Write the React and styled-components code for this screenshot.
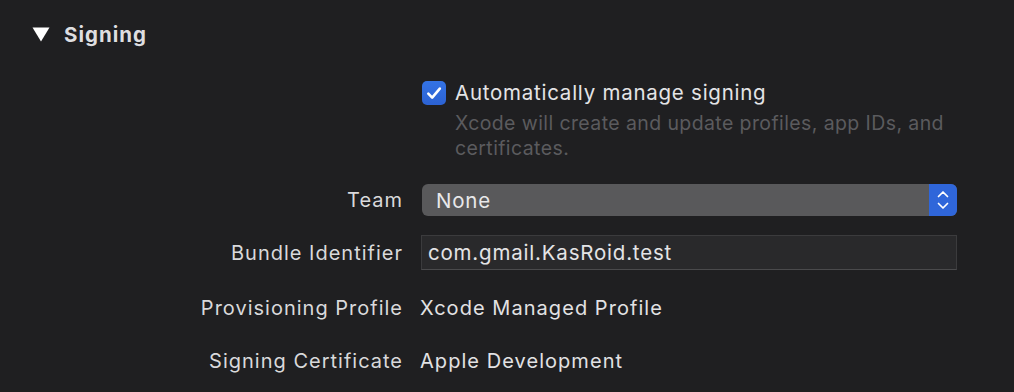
import React from "react";
import styled, { createGlobalStyle } from "styled-components";

const Global = createGlobalStyle`
  html, body { margin: 0; padding: 0; background: #1f1f21; }
  body { font-family: Inter, "Noto Sans", "Liberation Sans", sans-serif; -webkit-font-smoothing: antialiased; }
`;

const Page = styled.div`
  width: 1014px;
  height: 392px;
  background: #1f1f21;
  box-sizing: border-box;
  padding-top: 23px;
  overflow: hidden;
`;

const Header = styled.div`
  display: flex;
  align-items: center;
  gap: 14px;
  height: 24px;
  padding-left: 32px;
`;

const Disclosure = styled.svg`
  width: 18px;
  height: 15px;
  display: block;
  margin-top: -2px;
`;

const SectionTitle = styled.span`
  font-size: 20.5px;
  font-weight: 700;
  letter-spacing: 1px;
  color: #dedee0;
  line-height: 24px;
`;

const Row = styled.div`
  display: grid;
  grid-template-columns: 402px 537px;
  column-gap: 18px;
  align-items: center;
  height: ${(p) => p.$h}px;
  margin-top: ${(p) => p.$mt}px;
`;

const Label = styled.div`
  text-align: right;
  font-size: 20px;
  letter-spacing: 1px;
  margin-right: -1px;
  color: #d9d9db;
  white-space: nowrap;
`;

const Value = styled.div`
  font-size: 20px;
  letter-spacing: 1.05px;
  color: #e2e2e4;
  white-space: nowrap;
`;

const CheckLine = styled.div`
  display: flex;
  align-items: center;
  gap: 9px;
  padding-left: 2px;
`;

const CheckBox = styled.div`
  width: 24px;
  height: 24px;
  border-radius: 5px;
  background: linear-gradient(#3473e4, #2c62d3);
  display: flex;
  align-items: center;
  justify-content: center;
`;

const CheckText = styled.span`
  font-size: 20.5px;
  letter-spacing: 0.75px;
  color: #e4e4e6;
`;

const Desc = styled.div`
  grid-column: 2;
  padding-left: 35px;
  font-size: 19.5px;
  letter-spacing: 0.4px;
  line-height: 25px;
  color: #5b5b5e;
  width: 500px;
`;

const DescRow = styled.div`
  display: grid;
  grid-template-columns: 402px 537px;
  column-gap: 18px;
  margin-top: ${(p) => p.$mt}px;
`;

const Popup = styled.div`
  margin-left: 2px;
  height: 32px;
  border-radius: 6px;
  background: #59595b;
  display: flex;
  align-items: stretch;
  overflow: hidden;
`;

const PopupText = styled.div`
  flex: 1;
  display: flex;
  align-items: center;
  padding-left: 14px;
  font-size: 20.5px;
  letter-spacing: 0.8px;
  color: #e8e8ea;
`;

const Stepper = styled.div`
  width: 28px;
  background: #2f66da;
  display: flex;
  align-items: center;
  justify-content: center;
`;

const Field = styled.div`
  margin-left: 1px;
  height: 35px;
  box-sizing: border-box;
  background: #29292b;
  border: 1px solid #3b3b3d;
  border-bottom-color: #4a4a4c;
  display: flex;
  align-items: center;
  padding-left: 6px;
  font-size: 20.5px;
  letter-spacing: 0.8px;
  color: #e4e4e6;
`;

export default function App() {
  return (
    <Page>
      <Global />
      <Header>
        <Disclosure viewBox="0 0 18 15">
          <polygon points="0.5,0.5 17.5,0.5 9,14.5" fill="#ffffff" />
        </Disclosure>
        <SectionTitle>Signing</SectionTitle>
      </Header>

      <Row $h={24} $mt={33}>
        <Label />
        <CheckLine>
          <CheckBox>
            <svg width="24" height="24" viewBox="0 0 24 24">
              <path d="M6.3 12.6 L10.2 16.6 L17.8 7.6" fill="none" stroke="#fff" strokeWidth="2.6" strokeLinecap="round" strokeLinejoin="round" />
            </svg>
          </CheckBox>
          <CheckText>Automatically manage signing</CheckText>
        </CheckLine>
      </Row>

      <DescRow $mt={7}>
        <Desc>Xcode will create and update profiles, app IDs, and certificates.</Desc>
      </DescRow>

      <Row $h={32} $mt={23}>
        <Label>Team</Label>
        <Popup>
          <PopupText>None</PopupText>
          <Stepper>
            <svg width="14" height="20" viewBox="0 0 14 20">
              <path d="M2.5 6.5 L7 2 L11.5 6.5" fill="none" stroke="#fff" strokeWidth="1.7" strokeLinecap="round" strokeLinejoin="round" />
              <path d="M2.5 13.5 L7 18 L11.5 13.5" fill="none" stroke="#fff" strokeWidth="1.7" strokeLinecap="round" strokeLinejoin="round" />
            </svg>
          </Stepper>
        </Popup>
      </Row>

      <Row $h={35} $mt={19}>
        <Label>Bundle Identifier</Label>
        <Field>com.gmail.KasRoid.test</Field>
      </Row>

      <Row $h={32} $mt={22}>
        <Label>Provisioning Profile</Label>
        <Value>Xcode Managed Profile</Value>
      </Row>

      <Row $h={32} $mt={21}>
        <Label>Signing Certificate</Label>
        <Value>Apple Development</Value>
      </Row>
    </Page>
  );
}
